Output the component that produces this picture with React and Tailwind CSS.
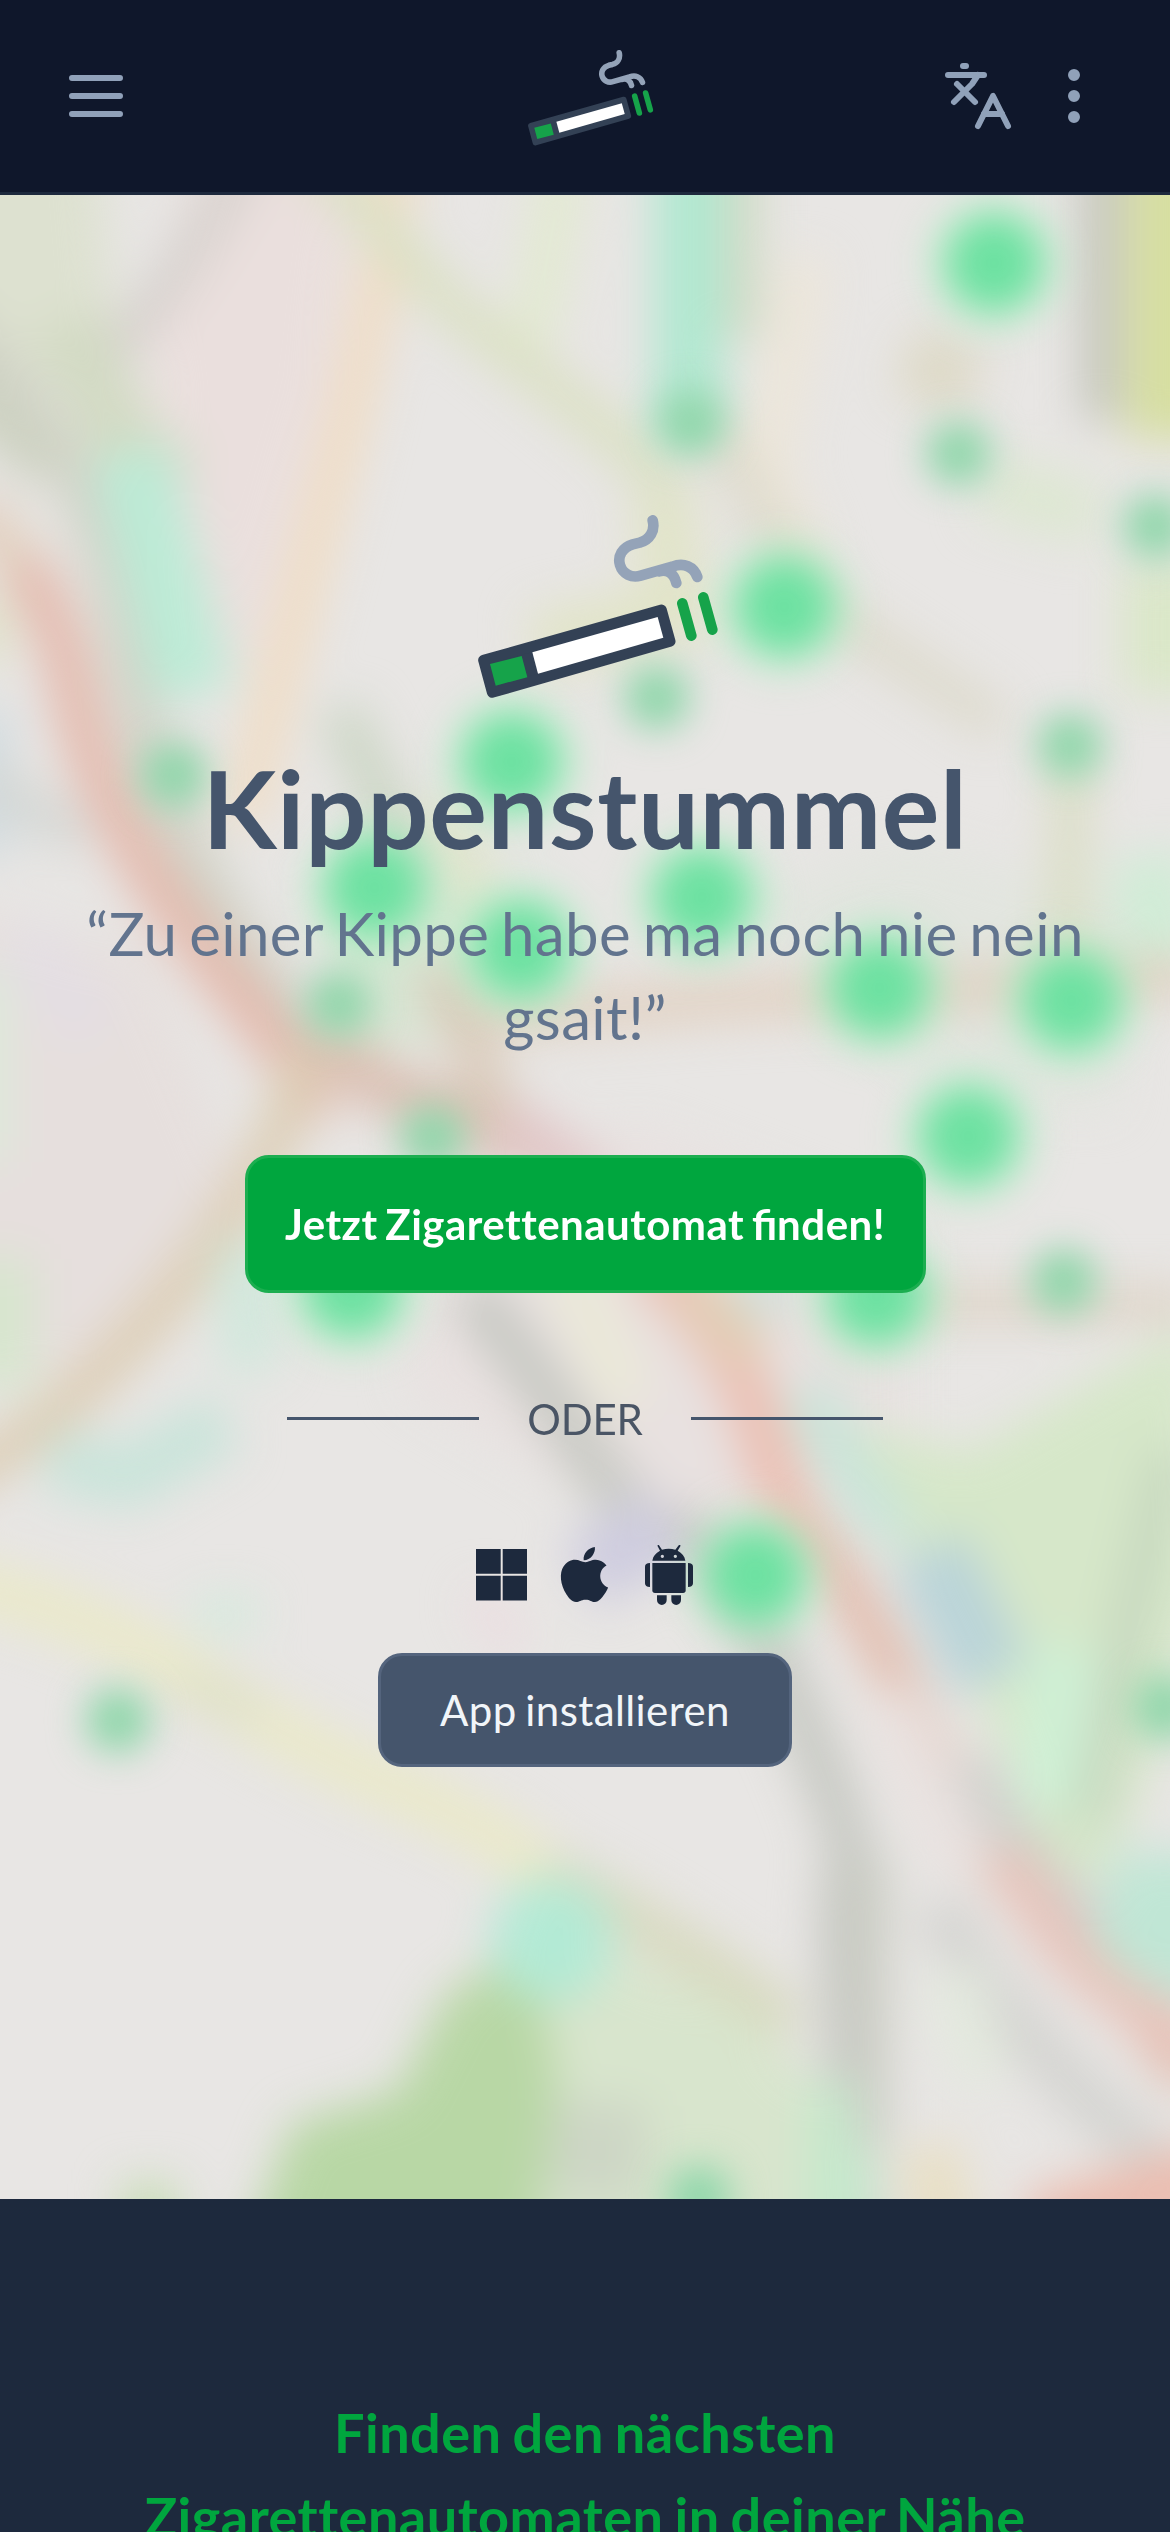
import React from "react";
import { Languages, EllipsisVertical } from "lucide-react";
import { IoLogoApple } from "react-icons/io5";

function Logo({ className }) {
  return (
    <svg viewBox="82 75 720 550" className={className} fill="none" strokeLinecap="round" strokeLinejoin="round" strokeWidth="32">
      <path
        d="M98.4 510.7L632.3 359.4L658.6 454.3L124.7 607.6Z"
        fill="#334155"
        stroke="#334155"
      />
      <path d="M118 522L213 498L230 562L135 587Z" fill="#16a34a" />
      <path d="M245 487L621 381L638 443L262 551Z" fill="#fff" />
      <path d="M695 340L722 437M758 322L785 419" stroke="#16a34a" />
      <path
        d="M606 91C614 122 598 149 567 158L546 163C515 172 500 199 508 225C516 252 543 265 570 257L665 230C699 217 729 229 740 261M625 244C650 237 670 250 677 279"
        stroke="#94a3b8"
      />
    </svg>
  );
}

function MenuIcon() {
  return (
    <svg viewBox="0 0 24 24" className="size-18" fill="none" stroke="currentColor" strokeWidth="2" strokeLinecap="round">
      <path d="M4 6h16M4 12h16M4 18h16" />
    </svg>
  );
}

function WindowsIcon() {
  return (
    <svg viewBox="0 0 51.4 51.4" className="h-[51.4px] w-[51.4px]" fill="currentColor">
      <path d="M0 0h24.7v24.7H0zM26.7 0h24.7v24.7H26.7zM0 26.7h24.7v24.7H0zM26.7 26.7h24.7v24.7H26.7z" />
    </svg>
  );
}

function AndroidIcon() {
  return (
    <svg viewBox="855 75 144 180" className="h-[60px] w-[48px]" fill="currentColor">
      <path
        fillRule="evenodd"
        d="M877 122C879 108 887 99 900 92L893 79C891 75 896 73 898 77L906 89C919 85 934 85 946 89L955 77C958 73 963 75 961 79L953 92C966 99 974 108 976 122ZM902 109a5 5 0 1 0 10 0a5 5 0 1 0-10 0M941 109a5 5 0 1 0 10 0a5 5 0 1 0-10 0"
      />
      <path d="M870 129V201C860 201 855 197 855 190V140C855 133 860 129 870 129ZM984 129V201C994 201 999 197 999 190V140C999 133 994 129 984 129Z" />
      <path d="M877 129H977V211Q977 219 969 219H885Q877 219 877 211Z" />
      <path d="M891 226H920V240A14.5 15 0 0 1 891 240ZM934 226H963V240A14.5 15 0 0 1 934 240Z" />
    </svg>
  );
}

const bigMarkers = [
  [616, 163], [486, 376], [317, 472], [232, 550], [323, 588], [435, 556],
  [545, 612], [664, 620], [600, 704], [218, 798], [543, 803], [468, 976],
];
const smallMarkers = [
  [428, 262], [594, 281], [716, 326], [407, 432], [663, 462], [108, 480],
  [210, 622], [268, 705], [659, 794], [73, 1066], [722, 1058], [433, 1362],
];

function BlurredMap() {
  return (
    <svg
      viewBox="0 120.8 725 1241.8"
      preserveAspectRatio="none"
      className="absolute inset-0 h-full w-full"
      fill="none"
      aria-hidden="true"
    >
      <defs>
        <filter id="soft" filterUnits="userSpaceOnUse" x="-60" y="60" width="845" height="1370" colorInterpolationFilters="sRGB">
          <feGaussianBlur stdDeviation="14" />
        </filter>
        <filter id="dot" filterUnits="userSpaceOnUse" x="-60" y="60" width="845" height="1370" colorInterpolationFilters="sRGB">
          <feGaussianBlur stdDeviation="11.5" />
        </filter>
      </defs>
      <rect x="0" y="120" width="725" height="1243" fill="#e8e6e4" />
      <g filter="url(#soft)">
        <path d="M130 70H225L205 240L150 430L100 270L90 200Z" fill="#eadfdd" />
        <path d="M-40 560L90 590L160 760L60 850L-40 860Z" fill="#e6dfdd" />
        <path d="M290 720L400 700L560 760L560 900L420 960L250 860Z" fill="#e8e1e0" />
        <path d="M200 560L300 540L330 640L220 650Z" fill="#d8e6d4" />
        <path d="M450 560L560 520L700 560L690 690L600 680Z" fill="#e2e5df" />
        <path d="M-40 80H60L70 200L60 260L-40 190Z" fill="#dde1d0" />
        <path d="M-30 200Q60 280 78 400T190 640" stroke="#d0d2c6" strokeWidth="26" />
        <path d="M155 90Q110 180 50 240" stroke="#d5d0cc" strokeWidth="22" />
        <path d="M40 200L80 280L110 300" stroke="#d2dac3" strokeWidth="44" />
        <path d="M-40 225L30 290" stroke="#ccd1c0" strokeWidth="30" />
        <path d="M-20 320Q30 350 46 430T135 600T190 680" stroke="#e4b8ab" strokeWidth="28" />
        <path d="M-10 320L12 350" stroke="#e2d2c0" strokeWidth="30" />
        <path d="M-10 370V410" stroke="#dfe2c8" strokeWidth="30" />
        <path d="M-10 440V530" stroke="#d0dbe0" strokeWidth="34" />
        <path d="M-10 480L50 520" stroke="#d3d6d3" strokeWidth="24" />
        <path d="M-10 600V720" stroke="#dceada" strokeWidth="30" />
        <path d="M10 580L60 640" stroke="#e4dee3" strokeWidth="40" />
        <path d="M80 280L120 430" stroke="#bcebd6" strokeWidth="48" />
        <path d="M248 90Q235 190 205 300T150 510" stroke="#f1dcc2" strokeWidth="24" />
        <path d="M190 90L280 190L380 270L420 310" stroke="#dae0c2" strokeWidth="24" />
        <path d="M350 100L330 210" stroke="#e2ead0" strokeWidth="28" />
        <path d="M410 310L420 380L330 400" stroke="#e1e4c8" strokeWidth="40" />
        <path d="M427 60V270" stroke="#afe8d0" strokeWidth="42" />
        <path d="M460 80V210" stroke="#cdd8c0" strokeWidth="20" />
        <path d="M500 160L475 290L500 350" stroke="#ede6d8" strokeWidth="26" />
        <path d="M590 210L575 250" stroke="#ddd9c6" strokeWidth="46" />
        <path d="M682 80V260" stroke="#bfc1b6" strokeWidth="22" />
        <path d="M730 60V272" stroke="#d6dea0" strokeWidth="64" />
        <path d="M610 300L680 320" stroke="#dde7d2" strokeWidth="40" />
        <path d="M440 260L500 370L620 450" stroke="#dcd9ca" strokeWidth="22" />
        <path d="M725 350V430" stroke="#dae7c8" strokeWidth="60" />
        <path d="M664 470L660 600" stroke="#d9ddc2" strokeWidth="22" />
        <path d="M710 530L725 600" stroke="#d0ecd6" strokeWidth="48" />
        <path d="M210 440L240 500L250 560" stroke="#cad5c3" strokeWidth="26" />
        <path d="M270 500L300 560" stroke="#dfe5c8" strokeWidth="26" />
        <path d="M300 630L450 620L740 605" stroke="#e1d1c2" strokeWidth="26" />
        <path d="M190 640L240 675L340 715" stroke="#dabfb2" strokeWidth="32" />
        <path d="M310 690L370 735" stroke="#e1c6c7" strokeWidth="30" />
        <path d="M270 600L310 690" stroke="#d9cab9" strokeWidth="26" />
        <path d="M190 650Q165 760 30 880L-30 920" stroke="#dccdb4" strokeWidth="26" />
        <path d="M150 770L155 850" stroke="#d0e8dc" strokeWidth="34" />
        <path d="M0 780V860" stroke="#d6e6cd" strokeWidth="40" />
        <path d="M30 905L80 915L140 880" stroke="#c9e4da" strokeWidth="38" />
        <path d="M290 800Q325 840 360 895T420 950T490 1050T525 1160T535 1400" stroke="#c5c7c1" strokeWidth="28" />
        <path d="M350 780L390 870" stroke="#ebe9d8" strokeWidth="34" />
        <path d="M400 780Q455 830 470 880T500 960" stroke="#ecbdb0" strokeWidth="30" />
        <path d="M500 950Q540 1000 570 1070T650 1190T740 1290" stroke="#e2b8a8" strokeWidth="24" />
        <path d="M425 790Q445 820 470 840" stroke="#e3cdb4" strokeWidth="30" />
        <path d="M560 808H740" stroke="#ddd2c4" strokeWidth="20" />
        <path d="M460 810L485 790" stroke="#cce0da" strokeWidth="26" />
        <path d="M740 820L600 900L520 880L560 960L620 1080L660 1190L700 1130L750 980Z" fill="#d6e7c9" />
        <path d="M500 860Q530 930 560 950" stroke="#c9e4d9" strokeWidth="32" />
        <path d="M575 960L615 1040" stroke="#bad4d8" strokeWidth="50" />
        <path d="M660 1020L650 1120" stroke="#cff0d5" strokeWidth="44" />
        <path d="M725 900Q690 1040 675 1130" stroke="#c4d5bd" strokeWidth="20" />
        <path d="M600 1090Q640 1170 690 1200T740 1240" stroke="#d0cfcb" strokeWidth="26" />
        <path d="M545 1050L600 1160" stroke="#e9e2e0" strokeWidth="38" />
        <path d="M700 1160H750V1230L690 1210Z" fill="#c0e6d5" stroke="#c0e6d5" strokeWidth="24" />
        <path d="M625 1150Q660 1230 745 1265" stroke="#e8c3ba" strokeWidth="28" />
        <path d="M580 1180Q630 1270 730 1350" stroke="#d3d3d0" strokeWidth="30" />
        <path d="M590 1220L610 1290" stroke="#e3e9de" strokeWidth="36" />
        <path d="M375 940L400 980" stroke="#ceccdf" strokeWidth="64" />
        <path d="M300 1010L315 1000" stroke="#ecdbe0" strokeWidth="44" />
        <path d="M-30 980Q60 1000 120 1040T250 1110T340 1165" stroke="#eae9c9" strokeWidth="32" />
        <path d="M110 1045L160 1060" stroke="#dfe1c6" strokeWidth="24" />
        <path d="M340 1160Q420 1200 490 1255" stroke="#d7d9be" strokeWidth="28" />
        <path d="M140 990V1010" stroke="#d2ebdc" strokeWidth="40" />
        <path d="M340 1190L450 1240L520 1300L500 1400H330L310 1260Z" fill="#d8e5cd" />
        <path d="M155 1400L185 1320L250 1300L280 1240L325 1210L340 1290L325 1400Z" fill="#b8d7a5" stroke="#b8d7a5" strokeWidth="10" />
        <path d="M340 1330L400 1335" stroke="#cdd6c5" strokeWidth="60" />
        <circle cx="342" cy="1202" r="38" fill="#b3ead5" />
        <path d="M75 1375H110" stroke="#c6dcb4" strokeWidth="44" />
        <path d="M522 1290L520 1400" stroke="#c5e9cc" strokeWidth="40" />
        <path d="M575 1330L590 1400" stroke="#e8dfc4" strokeWidth="38" />
        <path d="M640 1385L760 1350" stroke="#ebbdb0" strokeWidth="50" />
        <path d="M540 1150V1330" stroke="#cbcdc4" strokeWidth="22" />
        <path d="M725 1190V1210" stroke="#c0e6d5" strokeWidth="30" />
      </g>
      <g filter="url(#dot)">
        {bigMarkers.map(([x, y]) => (
          <circle key={`${x}-${y}-glow`} cx={x} cy={y} r="42" fill="#b2f0c4" opacity="0.55" />
        ))}
        {bigMarkers.map(([x, y]) => (
          <circle key={`${x}-${y}`} cx={x} cy={y} r="29" fill="#6ce1a1" />
        ))}
        {smallMarkers.map(([x, y]) => (
          <circle key={`${x}-${y}`} cx={x} cy={y} r="20" fill="#8dd6a9" />
        ))}
      </g>
    </svg>
  );
}

export default function App() {
  return (
    <div className="flex h-[2532px] w-full flex-col overflow-hidden bg-slate-800 font-['Lato',sans-serif]">
      <header className="flex h-[195px] shrink-0 items-center border-b-[3px] border-slate-800 bg-slate-900 px-15 text-slate-400">
        <div className="flex flex-1">
          <button type="button" aria-label="Menü">
            <MenuIcon />
          </button>
        </div>
        <Logo className="mr-[-12px] mb-[-4px] h-[95.7px] w-[125.3px]" />
        <div className="flex flex-1 justify-end gap-6">
          <button type="button" aria-label="Sprache">
            <Languages className="size-18" strokeWidth={2} />
          </button>
          <button type="button" aria-label="Mehr">
            <EllipsisVertical className="size-18" strokeWidth={2} />
          </button>
        </div>
      </header>

      <main className="relative h-[2004px] shrink-0 overflow-hidden">
        <BlurredMap />
        <div className="relative flex flex-col items-center px-12 pt-[320px]">
          <Logo className="ml-[25px] h-[183.3px] w-[240px]" />
          <h1 className="mt-[48.7px] text-[108px] leading-[120px] font-bold tracking-[0.65px] text-slate-600">
            Kippenstummel
          </h1>
          <p className="mt-6 text-center text-[60px] leading-[84px] tracking-[0.35px] [word-spacing:-4px] text-slate-500">
            “Zu einer Kippe habe ma noch nie nein gsait!”
          </p>
          <button
            type="button"
            className="mt-24 h-[138px] w-[681px] rounded-[24px] border-[3px] border-[#1cae50] bg-green-600 text-[42px] leading-[60px] font-bold tracking-[0.5px] [word-spacing:-3px] text-white"
          >
            Jetzt Zigarettenautomat <span className="tracking-normal">fi</span>nden!
          </button>
          <div className="mt-24 flex items-center gap-12 text-[42px] leading-[60px] text-gray-600">
            <div className="h-[3px] w-[192px] bg-slate-600" />
            <span className="tracking-[-0.2px]">ODER</span>
            <div className="h-[3px] w-[192px] bg-slate-600" />
          </div>
          <div className="mt-24 mr-px flex h-[60px] items-center text-slate-800">
            <WindowsIcon />
            <IoLogoApple className="ml-[26.5px] size-[63px]" />
            <div className="ml-[29px]">
              <AndroidIcon />
            </div>
          </div>
          <button
            type="button"
            className="mt-12 h-[114px] w-[414px] rounded-[24px] border-[3px] border-[#54647d] bg-slate-600 text-[42px] leading-[60px] tracking-[0.4px] [word-spacing:-2.5px] text-slate-100"
          >
            App installieren
          </button>
        </div>
      </main>

      <section className="shrink-0 px-24 pt-48 text-center">
        <h2 className="text-[54px] leading-[84px] font-bold tracking-[0.5px] [word-spacing:-2.7px] text-green-600">
          Finden den nächsten
          <br />
          Zigarettenautomaten in deiner Nähe
        </h2>
      </section>
    </div>
  );
}
